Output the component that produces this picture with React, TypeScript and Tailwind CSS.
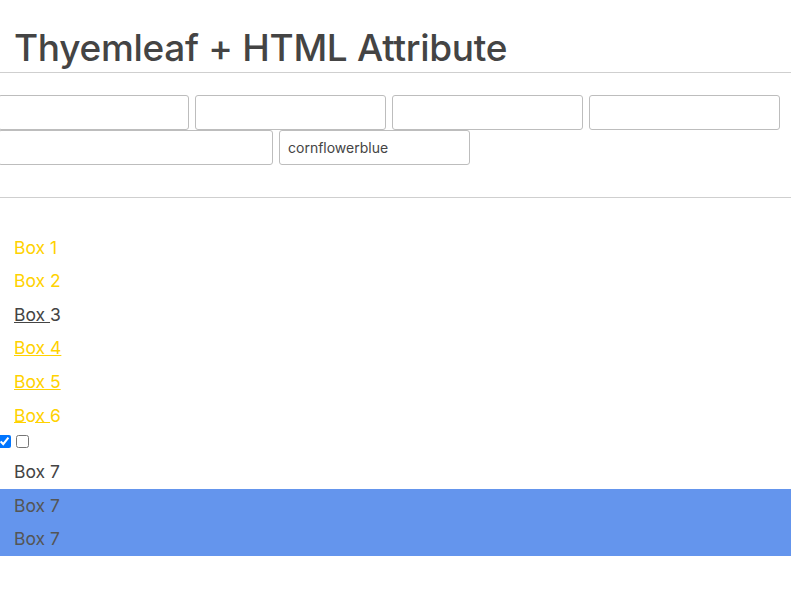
import React from 'react';

const font = { fontFamily: '"Inter", "Noto Sans", sans-serif' };

function Box({ children, className = '' }: { children: React.ReactNode; className?: string }) {
  return <div className={`h-[33.6px] flex items-center pl-[14px] text-[17.5px] ${className}`}>{children}</div>;
}

export default function App() {
  const input = 'h-[35px] rounded-[3px] border border-[#bdbdbd] bg-white px-2 text-[14px] text-[#444] outline-none';
  return (
    <div className="w-[791px] min-h-[615px] bg-white text-[#444] overflow-hidden" style={font}>
      {/* Title */}
      <h1 className="pl-[14px] pt-[24px] pb-[0px] text-[37px] leading-[48px] font-medium tracking-[-0.3px] text-[#444]">
        Thyemleaf + HTML Attribute
      </h1>
      <hr className="border-t border-[#cfcfcf]" />

      {/* Inputs */}
      <div className="pt-[22px] pb-[32px] -ml-[2px]">
        <div className="flex gap-[6px]">
          <input className={`${input} w-[191px]`} />
          <input className={`${input} w-[191px]`} />
          <input className={`${input} w-[191px]`} />
          <input className={`${input} w-[191px]`} />
        </div>
        <div className="flex gap-[6px]">
          <input className={`${input} w-[275px]`} />
          <input className={`${input} w-[191px]`} defaultValue="cornflowerblue" />
        </div>
      </div>
      <hr className="border-t border-[#cfcfcf]" />

      {/* Boxes */}
      <div className="pt-[33px]">
        <Box className="text-[#ffd200]">Box 1</Box>
        <Box className="text-[#ffd200]">Box 2</Box>
        <Box className="text-[#444]">
          <span className="underline underline-offset-[1px] whitespace-pre">Box </span>3
        </Box>
        <Box className="text-[#ffd200]">
          <span className="underline underline-offset-[1px]">Box 4</span>
        </Box>
        <Box className="text-[#ffd200]">
          <span className="underline underline-offset-[1px]">Box 5</span>
        </Box>
        <Box className="text-[#ffd200]">
          <span className="underline underline-offset-[0px] whitespace-pre">Box </span>6
        </Box>
        <div className="flex items-start gap-[5px] h-[23px] pt-[2px] -ml-[2px]">
          <input type="checkbox" defaultChecked className="w-[13px] h-[13px] m-0" />
          <input type="checkbox" className="w-[13px] h-[13px] m-0" />
        </div>
        <Box>Box 7</Box>
        <div className="bg-[#6495ed] text-[#555]">
          <Box>Box 7</Box>
          <Box>Box 7</Box>
        </div>
      </div>
    </div>
  );
}
